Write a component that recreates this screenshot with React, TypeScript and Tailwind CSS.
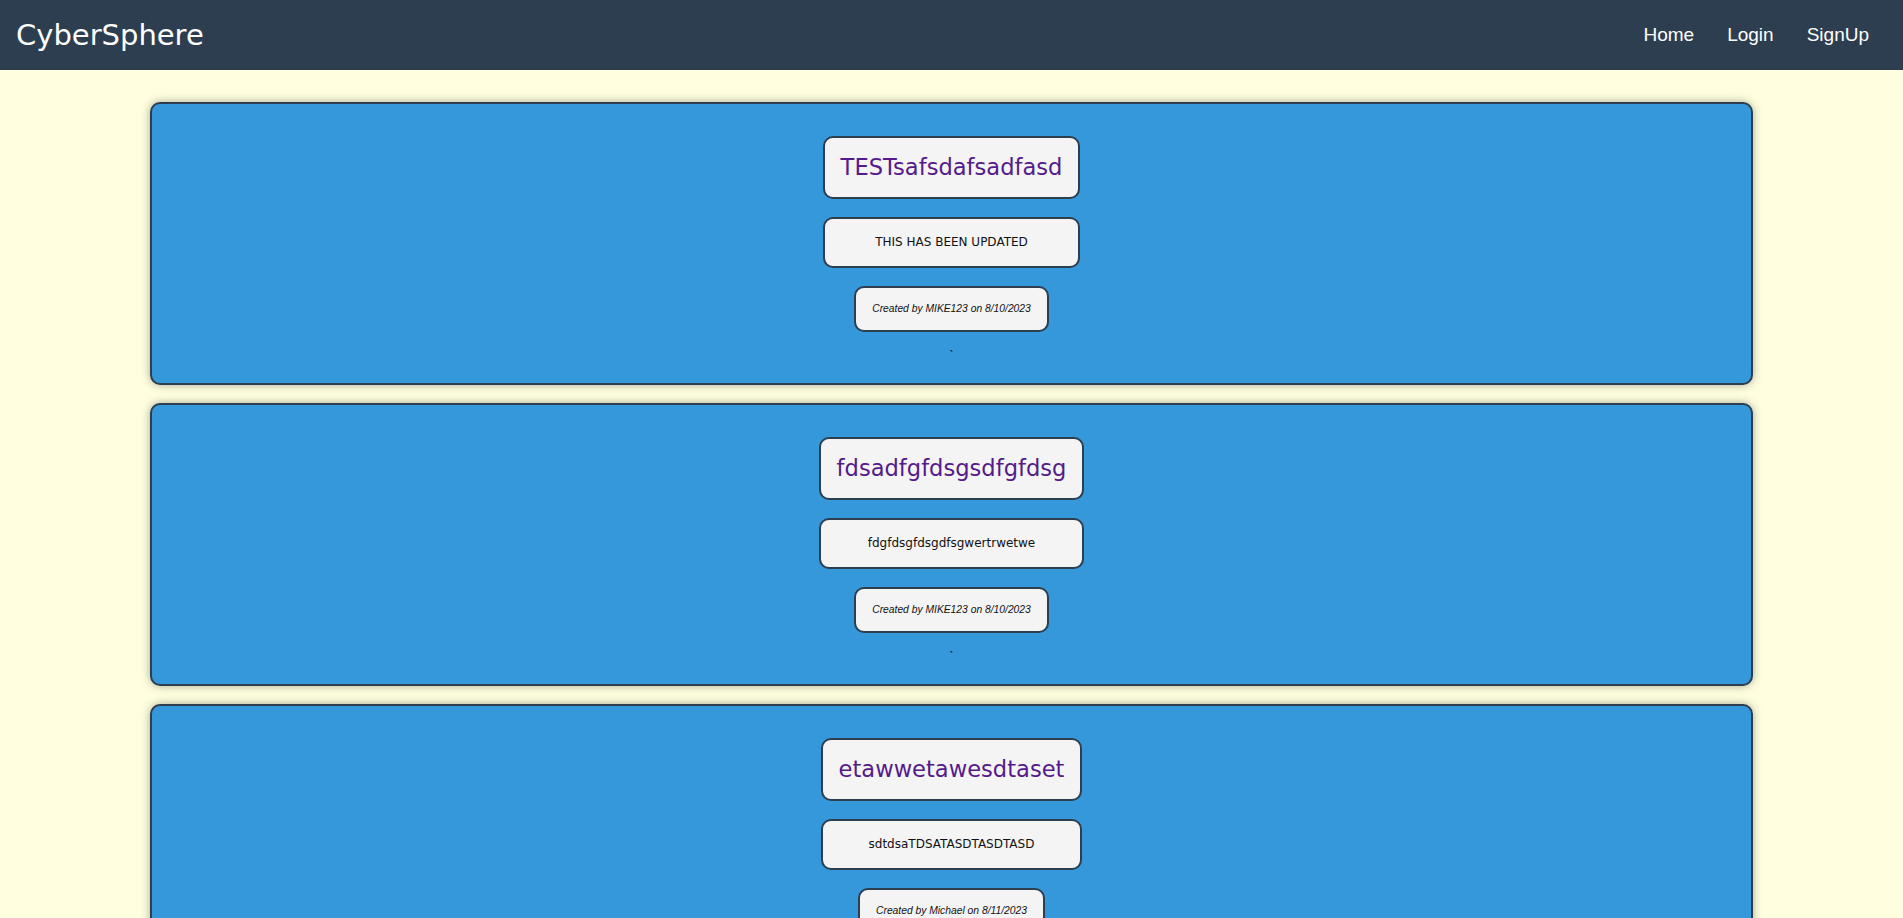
import React from "react";

const posts = [
  { title: "TESTsafsdafsadfasd", body: "THIS HAS BEEN UPDATED", author: "MIKE123", date: "8/10/2023" },
  { title: "fdsadfgfdsgsdfgfdsg", body: "fdgfdsgfdsgdfsgwertrwetwe", author: "MIKE123", date: "8/10/2023" },
  { title: "etawwetawesdtaset", body: "sdtdsaTDSATASDTASDTASD", author: "Michael", date: "8/11/2023" },
];

export default function App() {
  return (
    <div className="min-h-screen bg-[#ffffe0] font-['Liberation_Sans',Arial,sans-serif]">
      <nav className="h-[70px] bg-[#2c3e50] flex items-center justify-between pl-4 pr-[34px]">
        <a className="text-[29px] text-white leading-none font-['DejaVu_Sans',sans-serif]">CyberSphere</a>
        <div className="flex items-center gap-[33px] text-[19px] text-white">
          <a>Home</a>
          <a>Login</a>
          <a>SignUp</a>
        </div>
      </nav>
      <main className="flex flex-col gap-[18px] mx-[150px] pt-[32px] pb-8">
        {posts.map((p, i) => (
          <div
            key={i}
            className="bg-[#3498db] border-2 border-[#2c3e50] rounded-[10px] shadow-[0_0_10px_rgba(0,0,0,0.35)] pt-[32px] pb-[19px] flex flex-col items-center"
          >
            <div className="inline-flex flex-col items-stretch">
              <div className="bg-[#f4f4f4] border-2 border-[#2c3e50] rounded-[10px] px-4 py-[15px] text-center text-[22.6px] leading-[29px] text-[#551a8b] font-['DejaVu_Sans',sans-serif]">
                {p.title}
              </div>
              <div className="mt-[18px] bg-[#f4f4f4] border-2 border-[#2c3e50] rounded-[10px] px-4 py-4 text-center text-[12px] leading-[15px] text-[#111] font-['DejaVu_Sans',sans-serif]">
                {p.body}
              </div>
            </div>
            <div className="mt-[18px] bg-[#f4f4f4] border-2 border-[#2c3e50] rounded-[10px] px-4 py-[15px] text-center text-[10.3px] leading-[12px] italic text-[#111]">
              Created by {p.author} on {p.date}
            </div>
            <p className="mt-4 text-[12px] leading-[16px] text-black">`</p>
          </div>
        ))}
      </main>
    </div>
  );
}
